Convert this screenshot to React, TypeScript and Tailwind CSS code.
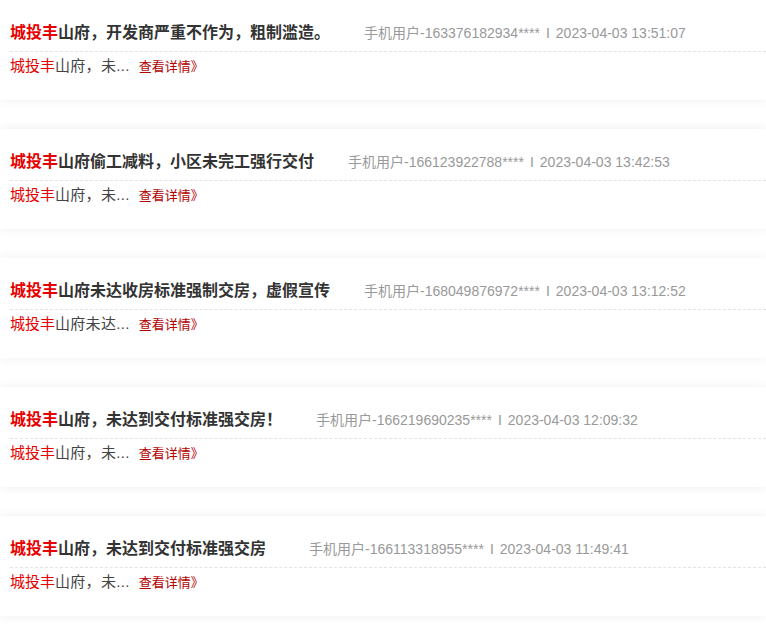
type Complaint = {
  id: number;
  title: string;
  user: string;
  time: string;
  summary: string;
  wide?: boolean;
};

const BRAND = '城投丰';

const complaints: Complaint[] = [
  { id: 1, title: '山府，开发商严重不作为，粗制滥造。', user: '手机用户-163376182934****', time: '2023-04-03 13:51:07', summary: '山府，未...' },
  { id: 2, title: '山府偷工减料，小区未完工强行交付', user: '手机用户-166123922788****', time: '2023-04-03 13:42:53', summary: '山府，未...' },
  { id: 3, title: '山府未达收房标准强制交房，虚假宣传', user: '手机用户-168049876972****', time: '2023-04-03 13:12:52', summary: '山府未达...' },
  { id: 4, title: '山府，未达到交付标准强交房！', user: '手机用户-166219690235****', time: '2023-04-03 12:09:32', summary: '山府，未...' },
  { id: 5, title: '山府，未达到交付标准强交房', user: '手机用户-166113318955****', time: '2023-04-03 11:49:41', summary: '山府，未...', wide: true },
];

function ComplaintCard({ item }: { item: Complaint }) {
  return (
    <div className="h-[100px] bg-white shadow-[0_0_10px_rgba(0,0,0,0.07)] mb-[29px] pt-[20px] pl-[10px]">
      <div className="h-[32px] flex items-start border-b border-dashed border-[#e3e3e3] whitespace-nowrap">
        <h3 className="text-[16px] leading-[26px] font-bold text-[#333]">
          <span className="text-[#e60000]">{BRAND}</span>
          {item.title}
        </h3>
        <span className={`${item.wide ? 'ml-[43px]' : 'ml-[34px]'} text-[14px] leading-[26px] text-[#999]`}>
          {item.user}
          <span className="mx-[6px]">I</span>
          {item.time}
        </span>
      </div>
      <div className="text-[15px] leading-[28px] text-[#444] whitespace-nowrap">
        <span className="text-[#e60000]">{BRAND}</span>
        <span className="tracking-[0.3px]">{item.summary}</span>
        <a href="#" className="ml-[9px] text-[13px] text-[#b30000]">
          查看详情》
        </a>
      </div>
    </div>
  );
}

export default function App() {
  return (
    <div className="w-full min-h-screen bg-white overflow-hidden font-['Liberation_Sans','Noto_Sans_CJK_SC',sans-serif]">
      {complaints.map((c) => (
        <ComplaintCard key={c.id} item={c} />
      ))}
    </div>
  );
}
